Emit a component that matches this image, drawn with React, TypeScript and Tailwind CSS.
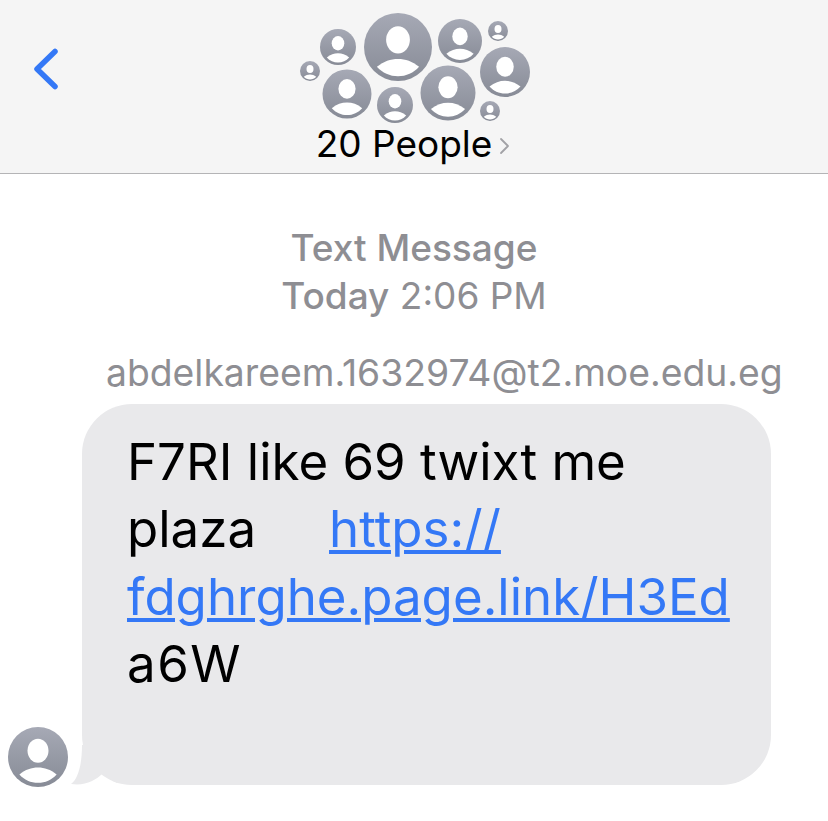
const people = [
  { cx: 398, cy: 47, r: 34 },
  { cx: 338, cy: 47, r: 18 },
  { cx: 460, cy: 41, r: 22 },
  { cx: 498, cy: 31, r: 10 },
  { cx: 310, cy: 71, r: 10 },
  { cx: 347, cy: 94, r: 24.5 },
  { cx: 395, cy: 105, r: 18 },
  { cx: 448, cy: 93, r: 27.5 },
  { cx: 505, cy: 72, r: 25 },
  { cx: 490, cy: 111, r: 10 },
]

// unit avatar, drawn in a 100x100 box
function Person({ cx, cy, r }: { cx: number; cy: number; r: number }) {
  const s = r / 50
  return (
    <g transform={`translate(${cx - r} ${cy - r}) scale(${s})`}>
      <circle cx="50" cy="50" r="50" fill="url(#avatarFill)" />
      <ellipse cx="50" cy="39.5" rx="17.5" ry="20" fill="#fff" />
      <path d="M19 79 C29 71 39 67.5 50 67.5 C61 67.5 71 71 81 79 C73 88 62 93 50 93 C38 93 27 88 19 79 Z" fill="#fff" />
    </g>
  )
}

function Gradient() {
  return (
    <defs>
      <linearGradient id="avatarFill" x1="0" y1="0" x2="0" y2="1">
        <stop offset="0" stopColor="#a6a9b5" />
        <stop offset="1" stopColor="#878b96" />
      </linearGradient>
    </defs>
  )
}

export default function App() {
  return (
    <div className="w-[828px] h-[821px] bg-white overflow-hidden font-['Inter',sans-serif]">
      <header className="relative h-[174px] bg-[#f5f5f5] border-b border-[#b4b4b6]">
        <button className="absolute left-[33px] top-[48px] text-[#3478f6]">
          <svg width="26" height="42" viewBox="0 0 26 42" fill="none">
            <path d="M22 3.5 L4 21 L22 38.5" stroke="currentColor" strokeWidth="5.5" strokeLinecap="round" strokeLinejoin="round" />
          </svg>
        </button>
        <svg className="absolute left-0 top-0" width="828" height="140" viewBox="0 0 828 140">
          <Gradient />
          {people.map((p) => (
            <Person key={`${p.cx}-${p.cy}`} {...p} />
          ))}
        </svg>
        <div className="pt-[122px] pr-[2px] flex items-center justify-center">
          <span className="text-[37px] leading-[44px] text-black">20 People</span>
          <svg className="ml-[7px] mt-[3px]" width="11" height="18" viewBox="0 0 11 18" fill="none">
            <path d="M2 2 L9 9 L2 16" stroke="#a2a2a6" strokeWidth="1.8" strokeLinecap="round" strokeLinejoin="round" />
          </svg>
        </div>
      </header>

      <div className="pt-[50px] text-center text-[37px] leading-[48px] text-[#8e8e93]">
        <p className="font-medium">Text Message</p>
        <p>
          <span className="font-medium">Today</span> 2:06 PM
        </p>
      </div>

      <p className="mt-[30px] pl-[106px] text-[37.3px] leading-[46px] text-[#8e8e93] whitespace-nowrap">
        abdelkareem.1632974@t2.moe.edu.eg
      </p>

      <div className="mt-[8px] pl-2 flex items-end gap-[14px]">
        <svg className="-mb-[2px] shrink-0" width="60" height="60" viewBox="0 0 60 60">
          <Person cx={30} cy={30} r={30} />
        </svg>
        <div className="relative w-[689px] h-[381px] rounded-[50px] bg-[#e9e9eb] pl-[45px] pt-[24px] text-[51px] leading-[67.3px] text-black">
          <p className="whitespace-nowrap">F7RI like 69 twixt me</p>
          <p className="whitespace-nowrap">
            plaza<span className="inline-block w-[73px]" />
            <a className="text-[#3478f6] underline underline-offset-[3px] decoration-[3.5px]">https://</a>
          </p>
          <p className="whitespace-nowrap">
            <a className="text-[#3478f6] underline underline-offset-[3px] decoration-[3.5px]">fdghrghe.page.link/H3Ed</a>
          </p>
          <p className="tracking-[1.5px]">a6W</p>
          <svg className="absolute -left-[11px] bottom-0" width="50" height="40" viewBox="0 0 50 40" fill="none">
            <path d="M11 0 C11 20 7 34 0 39 C14 41 24 36 32 28 C36 32 40 35 46 38 L46 0 Z" fill="#e9e9eb" />
          </svg>
        </div>
      </div>
    </div>
  )
}
